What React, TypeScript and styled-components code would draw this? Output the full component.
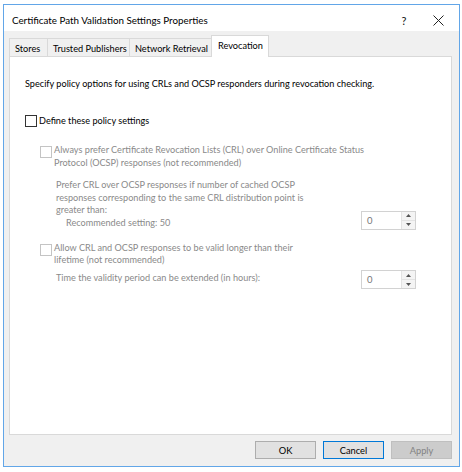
import React from "react";
import styled, { createGlobalStyle } from "styled-components";

const FONT = `"Lato", "Liberation Sans", sans-serif`;

const Global = createGlobalStyle`
  html, body { margin: 0; padding: 0; background: #ffffff; }
  body { font-family: ${FONT}; }
`;

const Window = styled.div`
  margin: 4px 0 0 3px;
  width: 457px;
  height: 463px;
  box-sizing: border-box;
  border: 1px solid #62a6e8;
  display: flex;
  flex-direction: column;
  background: #f0f0f0;
  font-family: ${FONT};
  color: #000;
`;

const TitleBar = styled.div`
  height: 26px;
  background: #ffffff;
  display: flex;
  align-items: center;
  padding: 0 4px 0 8px;
`;

const Title = styled.div`
  flex: 1;
  font-size: 9.8px;
  padding-top: 4px;
`;

const TitleButton = styled.div`
  width: 34px;
  height: 26px;
  display: flex;
  align-items: center;
  justify-content: center;
  font-size: 11px;
  padding-top: 5px;
  box-sizing: border-box;
  color: #111;
`;

const Body = styled.div`
  flex: 1;
  display: flex;
  flex-direction: column;
  padding: 5px 7px 0 5px;
`;

const TabRow = styled.div`
  display: flex;
  align-items: flex-end;
  height: 21px;
  position: relative;
  z-index: 1;
  margin-bottom: -1px;
`;

const Tab = styled.div<{ $w: number; $active?: boolean }>`
  width: ${(p) => p.$w}px;
  box-sizing: border-box;
  height: ${(p) => (p.$active ? 22 : 19)}px;
  border: 1px solid #d9d9d9;
  border-right: ${(p) => (p.$active ? "1px solid #d9d9d9" : "none")};
  border-bottom: ${(p) => (p.$active ? "none" : "1px solid #d9d9d9")};
  background: ${(p) => (p.$active ? "#ffffff" : "#f0f0f0")};
  font-size: 9.2px;
  display: flex;
  align-items: ${(p) => (p.$active ? "flex-start" : "center")};
  padding: ${(p) => (p.$active ? "4px 0 0 6px" : "1px 0 0 5px")};
  white-space: nowrap;
  overflow: hidden;
`;

const Panel = styled.div`
  height: 379px;
  box-sizing: border-box;
  background: #ffffff;
  border: 1px solid #d9d9d9;
  padding: 21px 15px 0 15px;
  font-size: 9.15px;
  line-height: 12.7px;
  display: flex;
  flex-direction: column;
`;

const Intro = styled.div`
  white-space: nowrap;
`;

const CheckRow = styled.div<{ $indent?: number; $top: number; $disabled?: boolean }>`
  display: flex;
  align-items: flex-start;
  margin-top: ${(p) => p.$top}px;
  padding-left: ${(p) => p.$indent ?? 0}px;
  color: ${(p) => (p.$disabled ? "#8a8a8a" : "#000")};
`;

const Box = styled.span<{ $disabled?: boolean }>`
  width: 12px;
  height: 12px;
  box-sizing: border-box;
  flex: none;
  border: 1px solid ${(p) => (p.$disabled ? "#c4c4c4" : "#333333")};
  background: #fff;
  margin-top: ${(p) => (p.$disabled ? 2 : 0)}px;
  margin-right: 2px;
`;

const CheckLabel = styled.span<{ $w?: number }>`
  width: ${(p) => (p.$w ? `${p.$w}px` : "auto")};
`;

const SettingRow = styled.div<{ $top: number }>`
  display: flex;
  align-items: flex-end;
  justify-content: space-between;
  margin-top: ${(p) => p.$top}px;
  padding-left: 31px;
  padding-right: 20px;
  color: #8a8a8a;
`;

const SettingText = styled.div`
  width: 252px;
`;

const Sub = styled.div`
  padding-left: 10px;
`;

const Spin = styled.div<{ $bottom?: number }>`
  width: 55px;
  height: 19px;
  box-sizing: border-box;
  border: 1px solid #d2d2d2;
  display: flex;
  background: #fff;
  margin-bottom: ${(p) => p.$bottom ?? 0}px;
`;

const SpinValue = styled.div`
  flex: 1;
  padding-left: 5px;
  line-height: 17px;
  font-size: 9.5px;
  color: #777;
`;

const SpinButtons = styled.div`
  width: 13px;
  display: flex;
  flex-direction: column;
  border-left: 1px solid #e3e3e3;
  background: #f4f4f4;
`;

const SpinBtn = styled.div<{ $top?: boolean }>`
  flex: 1;
  display: flex;
  align-items: center;
  justify-content: center;
  border-top: ${(p) => (p.$top ? "none" : "1px solid #e3e3e3")};
`;

const Footer = styled.div`
  display: flex;
  justify-content: flex-end;
  gap: 7px;
  padding: 6px 0 0 0;
`;

const Button = styled.div<{ $variant?: "default" | "disabled" }>`
  width: 61px;
  height: 18px;
  box-sizing: border-box;
  display: flex;
  align-items: center;
  justify-content: center;
  font-size: 9.3px;
  background: ${(p) => (p.$variant === "disabled" ? "#cccccc" : "#e1e1e1")};
  border: 1px solid
    ${(p) =>
      p.$variant === "default"
        ? "#0078d7"
        : p.$variant === "disabled"
        ? "#bfbfbf"
        : "#adadad"};
  color: ${(p) => (p.$variant === "disabled" ? "#838383" : "#000")};
`;

const Arrow = ({ up }: { up?: boolean }) => (
  <svg width="5" height="3" viewBox="0 0 5 3">
    <path d={up ? "M0 3 L2.5 0 L5 3 Z" : "M0 0 L2.5 3 L5 0 Z"} fill="#555" />
  </svg>
);

const SpinBox = ({ bottom }: { bottom?: number }) => (
  <Spin $bottom={bottom}>
    <SpinValue>0</SpinValue>
    <SpinButtons>
      <SpinBtn $top>
        <Arrow up />
      </SpinBtn>
      <SpinBtn>
        <Arrow />
      </SpinBtn>
    </SpinButtons>
  </Spin>
);

export default function App() {
  return (
    <>
      <Global />
      <Window>
        <TitleBar>
          <Title>Certificate Path Validation Settings Properties</Title>
          <TitleButton>?</TitleButton>
          <TitleButton>
            <svg width="11" height="11" viewBox="0 0 11 11">
              <path d="M0.5 0.5 L10.5 10.5 M10.5 0.5 L0.5 10.5" stroke="#222" strokeWidth="1" />
            </svg>
          </TitleButton>
        </TitleBar>
        <Body>
          <TabRow>
            <Tab $w={38}>Stores</Tab>
            <Tab $w={82}>Trusted Publishers</Tab>
            <Tab $w={82}>Network Retrieval</Tab>
            <Tab $w={58} $active>
              Revocation
            </Tab>
          </TabRow>
          <Panel>
            <Intro>Specify policy options for using CRLs and OCSP responders during revocation checking.</Intro>
            <CheckRow $top={24}>
              <Box />
              <CheckLabel>Define these policy settings</CheckLabel>
            </CheckRow>
            <CheckRow $top={17} $indent={15} $disabled>
              <Box $disabled />
              <CheckLabel $w={320}>
                Always prefer Certificate Revocation Lists (CRL) over Online Certificate Status Protocol (OCSP)
                responses (not recommended)
              </CheckLabel>
            </CheckRow>
            <SettingRow $top={9}>
              <SettingText>
                Prefer CRL over OCSP responses if number of cached OCSP responses corresponding to the same CRL
                distribution point is greater than:
                <Sub>Recommended setting: 50</Sub>
              </SettingText>
              <SpinBox bottom={0} />
            </SettingRow>
            <CheckRow $top={12} $indent={15} $disabled>
              <Box $disabled />
              <CheckLabel $w={244}>
                Allow CRL and OCSP responses to be valid longer than their lifetime (not recommended)
              </CheckLabel>
            </CheckRow>
            <SettingRow $top={3}>
              <SettingText>Time the validity period can be extended (in hours):</SettingText>
              <SpinBox bottom={-4} />
            </SettingRow>
          </Panel>
          <Footer>
            <Button>OK</Button>
            <Button $variant="default">Cancel</Button>
            <Button $variant="disabled">Apply</Button>
          </Footer>
        </Body>
      </Window>
    </>
  );
}
